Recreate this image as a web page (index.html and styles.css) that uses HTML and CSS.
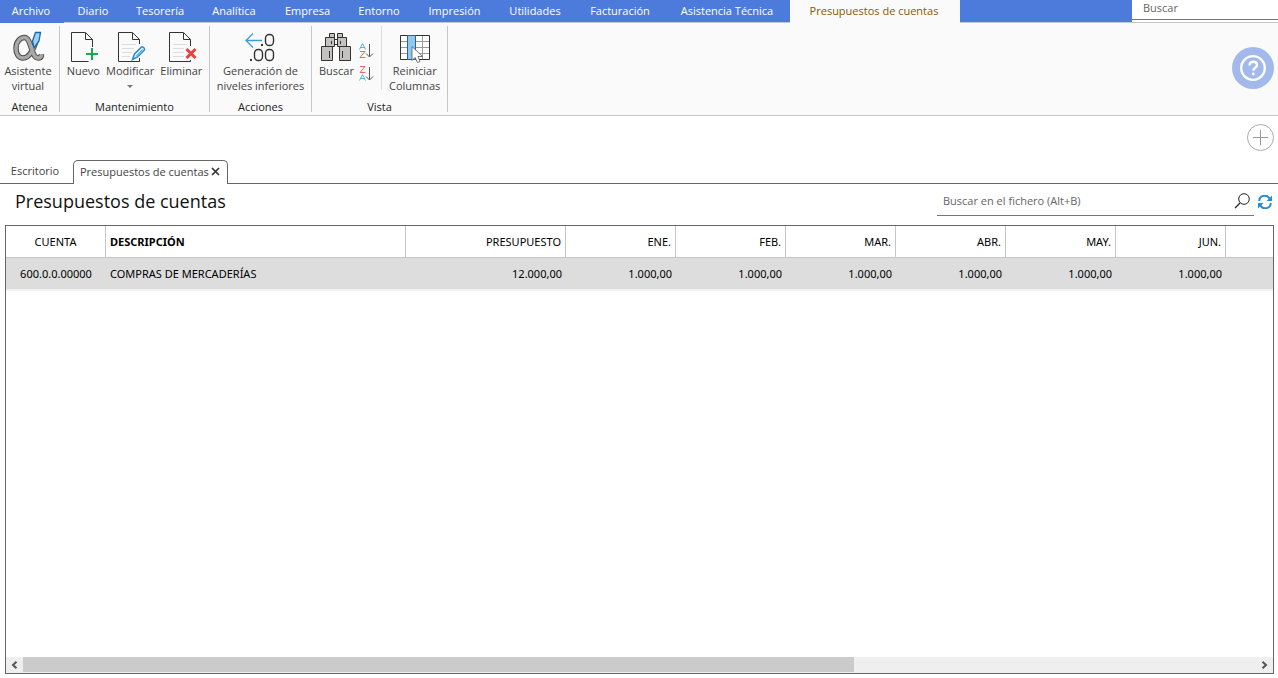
FILE: index.html
```
<!DOCTYPE html>
<html lang="es">
<head>
<meta charset="utf-8">
<meta name="viewport" content="width=device-width, initial-scale=1">
<title>Presupuestos de cuentas</title>
<link rel="stylesheet" href="styles.css">
</head>
<body>
<div class="app">
  <header class="topbar">
    <nav class="menu" aria-label="Menú principal">
      <button class="menu-item" type="button">Archivo</button>
      <button class="menu-item" type="button">Diario</button>
      <button class="menu-item" type="button">Tesorería</button>
      <button class="menu-item" type="button">Analítica</button>
      <button class="menu-item" type="button">Empresa</button>
      <button class="menu-item" type="button">Entorno</button>
      <button class="menu-item" type="button">Impresión</button>
      <button class="menu-item" type="button">Utilidades</button>
      <button class="menu-item" type="button">Facturación</button>
      <button class="menu-item" type="button">Asistencia Técnica</button>
      <button class="menu-item menu-item-active" type="button">Presupuestos de cuentas</button>
    </nav>
    <div class="top-search"><input type="text" placeholder="Buscar" aria-label="Buscar"></div>
  </header>

  <section class="ribbon" aria-label="Herramientas">
    <div class="group group-atenea">
      <div class="tools">
        <button class="tool" type="button">
          <svg class="icon" width="32" height="32" viewBox="0 0 32 32">
            <path d="M24.500 9C21.500 18 18 27 11 27C6 27 4 22 4 17C4 11 8 6.500 12.500 6.500C19.500 6.500 19 27 26 27C28.500 27 29.500 25.500 29.500 23" fill="none" stroke="#4c4c4c" stroke-width="5.500"/>
            <path d="M24.500 9C21.500 18 18 27 11 27C6 27 4 22 4 17C4 11 8 6.500 12.500 6.500C19.500 6.500 19 27 26 27C28.500 27 29.500 25.500 29.500 23" fill="none" stroke="#a8a8a8" stroke-width="3.500"/>
            <path d="M23.500 1.500H28.500L27 10L22 17L20.500 10Z" fill="#9fd0f3" stroke="#1668ae" stroke-width="1.300"/>
          </svg>
          <span>Asistente<br>virtual</span>
        </button>
      </div>
      <div class="group-name">Atenea</div>
    </div>

    <div class="group group-mant">
      <div class="tools">
        <button class="tool" type="button">
          <svg class="icon" width="32" height="32" viewBox="0 0 32 32">
            <path d="M18 1.500H4.500V30.500H21.500M25.500 16V8.500L18.500 1.500V8.500H25.500" fill="none" stroke="#333"/>
            <path d="M25 17V29M19 23H31" stroke="#14ad4e" stroke-width="2"/>
          </svg>
          <span>Nuevo</span>
        </button>
        <button class="tool" type="button">
          <svg class="icon" width="32" height="32" viewBox="0 0 32 32">
            <path d="M18 1.500H4.500V30.500H25.500V27M25.500 13V8.500L18.500 1.500V8.500H25.500" fill="none" stroke="#333"/>
            <path d="M8 13.500H22M8 17.500H20M8 21.500H18M8 25.500H16" stroke="#ddd"/>
            <path d="M18.500 28.500L20.500 23L27.500 16Q30.500 15.500 30.500 19L23.500 26Z" fill="#dff0fb" stroke="#2a8bd0" stroke-width="1.500"/>
            <path d="M22.500 25L28.500 18.500" stroke="#2a8bd0"/>
          </svg>
          <span>Modificar</span>
          <i class="caret"></i>
        </button>
        <button class="tool" type="button">
          <svg class="icon" width="32" height="32" viewBox="0 0 32 32">
            <path d="M18 1.500H4.500V30.500H25.500V29M25.500 15V8.500L18.500 1.500V8.500H25.500" fill="none" stroke="#333"/>
            <path d="M8 13.500H22M8 17.500H19M8 21.500H19M8 25.500H19" stroke="#ddd"/>
            <path d="M21.500 18L30.500 27M30.500 18L21.500 27" stroke="#ef3e3e" stroke-width="3"/>
          </svg>
          <span>Eliminar</span>
        </button>
      </div>
      <div class="group-name">Mantenimiento</div>
    </div>

    <div class="group group-acc">
      <div class="tools">
        <button class="tool" type="button">
          <svg class="icon" width="32" height="32" viewBox="0 0 32 32">
            <path d="M18 9.500H2M9 2.500L2 9.500L9 16.500" fill="none" stroke="#3d9bd8" stroke-width="1.300"/>
            <g fill="none" stroke="#333" stroke-width="1.400">
              <rect x="21.500" y="3.500" width="8" height="11" rx="3.800"/>
              <rect x="10.500" y="18.500" width="8" height="11" rx="3.800"/>
              <rect x="21.500" y="18.500" width="8" height="11" rx="3.800"/>
            </g>
            <path d="M17 13H19V15H17ZM6 28H8V30H6Z" fill="#333"/>
          </svg>
          <span>Generación de<br>niveles inferiores</span>
        </button>
      </div>
      <div class="group-name">Acciones</div>
    </div>

    <div class="group group-vista">
      <div class="tools">
        <button class="tool" type="button">
          <svg class="icon" width="32" height="32" viewBox="0 0 32 32">
            <g fill="#c4c2c1" stroke="#333">
              <path d="M9.500 2.500H14.500V6.500H9.500ZM17.500 2.500H22.500V6.500H17.500Z"/>
              <path d="M5.500 6.500H14.500V15.500H5.500ZM17.500 6.500H26.500V15.500H17.500Z"/>
              <path d="M1.500 15.500H12.500V29.500H1.500ZM19.500 15.500H30.500V29.500H19.500Z"/>
            </g>
            <path d="M14.500 8.500H17.500M14.500 13.500H17.500M11.500 10V13M20.500 10V13M9.500 20V27M22.500 20V27" stroke="#333"/>
          </svg>
          <span>Buscar</span>
        </button>
        <div class="sorts">
          <button class="sort" type="button" aria-label="Orden ascendente">
            <svg class="icon" width="15" height="16" viewBox="0 0 15 16">
              <path d="M.5 6.500L3.500 .5L6.500 6.500M1.500 4.500H5.500" fill="none" stroke="#5fb0e2"/>
              <path d="M1 8.500H6L1 14.500H6.500" fill="none" stroke="#ef6464"/>
              <path d="M10.500 1V13.500M7 10.500L10.500 14L14 10.500" fill="none" stroke="#555"/>
            </svg>
          </button>
          <button class="sort" type="button" aria-label="Orden descendente">
            <svg class="icon" width="15" height="16" viewBox="0 0 15 16">
              <path d="M1 .5H6L1 6.500H6.500" fill="none" stroke="#ef6464"/>
              <path d="M.5 14.500L3.500 8.500L6.500 14.500M1.500 12.500H5.500" fill="none" stroke="#5fb0e2"/>
              <path d="M10.500 1V13.500M7 10.500L10.500 14L14 10.500" fill="none" stroke="#555"/>
            </svg>
          </button>
        </div>
        <button class="tool tool-reset" type="button">
          <svg class="icon" width="32" height="32" viewBox="0 0 32 32">
            <path d="M1.500 4.500H30.500V28.500H1.500Z" fill="#fff"/>
            <path d="M2 10.500H30M2 16.500H30M2 22.500H30M23.500 5V28" stroke="#9a9a9a"/>
            <path d="M1.500 4.500H30.500V28.500H1.500Z" fill="none" stroke="#333"/>
            <path d="M8.500 4.500H16.500V28.500H8.500Z" fill="#8fc8f0" stroke="#1767ad"/>
            <path d="M13 15.500V29.500L16 26.500L18.500 31.500L21 30.500L19 25.500H23.500Z" fill="#fff" stroke="#555" stroke-width=".8"/>
          </svg>
          <span>Reiniciar<br>Columnas</span>
        </button>
      </div>
      <div class="group-name">Vista</div>
    </div>

    <button class="help" type="button" aria-label="Ayuda">
      <svg class="icon" width="42" height="42" viewBox="0 0 42 42">
        <circle cx="21" cy="21" r="21" fill="#a3b9ec"/>
        <circle cx="21" cy="21" r="11.800" fill="none" stroke="#fff" stroke-width="2.300"/>
        <path d="M17.500 18.500C17.500 13.500 25 13.500 25 18C25 21 21.300 20.500 21.300 23.800" fill="none" stroke="#fff" stroke-width="2.400"/>
        <circle cx="21.300" cy="27" r="1.400" fill="#fff"/>
      </svg>
    </button>
  </section>

  <div class="strip">
    <button class="add" type="button" aria-label="Añadir">
      <svg class="icon" width="28" height="28" viewBox="0 0 28 28">
        <circle cx="14.500" cy="14.500" r="13" fill="none" stroke="#aaa"/>
        <path d="M7 14.500H22M14.500 7V22" stroke="#999"/>
      </svg>
    </button>
  </div>

  <div class="tabs">
    <button class="tab" type="button">Escritorio</button>
    <div class="tab tab-active">
      <span>Presupuestos de cuentas</span>
      <button class="close" type="button" aria-label="Cerrar">
        <svg class="icon" width="9" height="9" viewBox="0 0 9 9"><path d="M1 1L8 8M8 1L1 8" stroke="#333" stroke-width="1.700"/></svg>
      </button>
    </div>
    <div class="tabs-fill"></div>
  </div>

  <main class="content">
    <div class="head">
      <h1>Presupuestos de cuentas</h1>
      <div class="file-search">
        <input type="text" placeholder="Buscar en el fichero (Alt+B)" aria-label="Buscar en el fichero">
        <svg class="icon" width="16" height="16" viewBox="0 0 16 16">
          <circle cx="10" cy="6" r="5.300" fill="none" stroke="#222"/>
          <path d="M6 10L1 15" stroke="#222" stroke-width="1.200"/>
        </svg>
      </div>
      <button class="refresh" type="button" aria-label="Actualizar">
        <svg class="icon" width="14" height="14" viewBox="0 0 14 14">
          <path d="M1.200 6A5.500 5.500 0 0 1 11.500 3.500M12.800 8A5.500 5.500 0 0 1 2.500 10.500" fill="none" stroke="#2a8bd0" stroke-width="2"/>
          <path d="M14 .5V6H8.500ZM0 13.500V8H5.500Z" fill="#2a8bd0"/>
        </svg>
      </button>
    </div>

    <div class="grid">
      <div class="grid-body">
        <table>
          <colgroup>
            <col class="c-cuenta"><col class="c-desc"><col class="c-pres">
            <col class="c-mes"><col class="c-mes"><col class="c-mes"><col class="c-mes"><col class="c-mes"><col class="c-mes">
            <col>
          </colgroup>
          <thead>
            <tr><th class="center">CUENTA</th><th class="left sorted">DESCRIPCIÓN</th><th>PRESUPUESTO</th><th>ENE.</th><th>FEB.</th><th>MAR.</th><th>ABR.</th><th>MAY.</th><th>JUN.</th><th></th></tr>
          </thead>
          <tbody>
            <tr><td class="center">600.0.0.00000</td><td class="left">COMPRAS DE MERCADERÍAS</td><td>12.000,00</td><td>1.000,00</td><td>1.000,00</td><td>1.000,00</td><td>1.000,00</td><td>1.000,00</td><td>1.000,00</td><td></td></tr>
          </tbody>
        </table>
      </div>
      <div class="scrollbar">
        <button class="arrow" type="button" aria-label="Desplazar a la izquierda">
          <svg class="icon" width="7" height="8" viewBox="0 0 7 8"><path d="M5.500 .8L2 4L5.500 7.200" fill="none" stroke="#555" stroke-width="2"/></svg>
        </button>
        <div class="track"><div class="thumb"></div></div>
        <button class="arrow" type="button" aria-label="Desplazar a la derecha">
          <svg class="icon" width="7" height="8" viewBox="0 0 7 8"><path d="M1.500 .8L5 4L1.500 7.200" fill="none" stroke="#555" stroke-width="2"/></svg>
        </button>
      </div>
    </div>
  </main>
</div>
</body>
</html>
```
FILE: styles.css
```
* { box-sizing: border-box; }

body {
  margin: 0;
  background: #fff;
  color: #444;
  font: 11px/15px "Open Sans", "Noto Sans", sans-serif;
}

button, input {
  margin: 0;
  padding: 0;
  border: 0;
  background: none;
  color: inherit;
  font: inherit;
}

.icon { display: block; flex: none; }

.app {
  display: flex;
  flex-direction: column;
  height: 100vh;
}

/* Menu bar */
.topbar {
  display: flex;
  height: 23px;
  background: #4d7bdc;
}

.menu {
  display: grid;
  flex: 1;
  grid-template-columns: 64px 60px 74px 74px 73px 70px 81px 80px 90px 124px 170px;
  border-bottom: 1px solid #c4c8d0;
}

.menu-item {
  padding-right: 2px;
  padding-bottom: 2px;
  color: #fff;
  text-align: center;
  white-space: nowrap;
}

.menu-item:first-child {
  margin-bottom: -1px;
  padding-bottom: 3px;
  background: #4d7bdc;
}

.menu-item-active {
  margin-bottom: -1px;
  padding-bottom: 3px;
  background: #fafafa;
  color: #8a5a00;
}

.top-search {
  width: 146px;
  height: 23px;
  border-bottom: 1px solid #c6c6c6;
  background: #fff;
}

.top-search input {
  display: block;
  width: 100%;
  height: 20px;
  padding: 0 11px 4px;
  border-bottom: 1px solid #777;
}

input::placeholder { color: #666; opacity: 1; }

/* Ribbon */
.ribbon {
  display: flex;
  height: 93px;
  padding-top: 3px;
  border-bottom: 1px solid #c6c6c6;
  background: #fafafa;
}

.group {
  display: flex;
  flex-direction: column;
  height: 86px;
  border-right: 1px solid #c6c6c6;
}

.group-atenea { width: 60px; }
.group-mant { width: 150px; }
.group-acc { width: 102px; }
.group-vista { width: 136px; }

.tools {
  display: flex;
  flex: 1;
  justify-content: center;
}

.tool {
  display: flex;
  flex-direction: column;
  align-items: center;
  padding-top: 5px;
  white-space: nowrap;
}

.group-atenea .tool { padding-right: 3px; }
.group-mant .tools { gap: 6px; }

.caret {
  margin-top: 7px;
  border: 3px solid transparent;
  border-top-color: #777;
  border-bottom: 0;
}

.group-name {
  height: 12px;
  color: #222;
  line-height: 14px;
  text-align: center;
}

.sorts {
  display: flex;
  flex-direction: column;
  gap: 7px;
  margin-left: 5px;
  padding: 17px 7px 0 0;
}

.tool-reset {
  height: 64px;
  padding-left: 7px;
  border-left: 1px solid #ddd;
}

.group-vista .tools { justify-content: flex-start; padding-left: 7px; }

.help { align-self: flex-start; margin: 21px 4px 0 auto; border-radius: 50%; }

/* Document tabs */
.strip {
  display: flex;
  justify-content: flex-end;
  height: 44px;
  padding: 7px 4px 0 0;
}

.add { align-self: flex-start; }

.tabs { display: flex; height: 24px; }

.tab {
  width: 73px;
  padding: 0 3px 2px 0;
  border-bottom: 1px solid #666;
}

.tab-active {
  display: flex;
  align-items: center;
  justify-content: space-between;
  width: 155px;
  padding: 0 7px 3px 6px;
  border: 1px solid #666;
  border-bottom: 0;
  border-radius: 5px 5px 0 0;
  white-space: nowrap;
}

.tabs-fill { flex: 1; border-bottom: 1px solid #666; }

/* File view */
.content {
  display: flex;
  flex: 1;
  flex-direction: column;
  min-height: 0;
  padding: 0 4px 4px 5px;
}

.head {
  display: flex;
  height: 41px;
}

h1 {
  flex: 1;
  margin: 0;
  padding-left: 10px;
  color: #111;
  font-size: 18px;
  font-weight: 400;
  line-height: 35px;
}

.file-search {
  display: flex;
  align-items: center;
  width: 317px;
  height: 32px;
  padding: 3px 4px 0 6px;
  border-bottom: 1px solid #777;
}

.file-search input { flex: 1; padding-bottom: 2px; }

.refresh { align-self: flex-start; padding: 11px 2px 0 4px; }

.grid {
  display: flex;
  flex: 1;
  flex-direction: column;
  min-height: 0;
  border: 1px solid #666;
}

.grid-body { flex: 1; overflow: hidden; }

table {
  width: 100%;
  border-collapse: separate;
  border-spacing: 0;
  table-layout: fixed;
  color: #000;
  font-family: "Noto Sans", "Open Sans", sans-serif;
}

.c-cuenta { width: 100px; }
.c-desc { width: 300px; }
.c-pres { width: 160px; }
.c-mes { width: 110px; }

th, td {
  height: 32px;
  padding: 0 4px;
  text-align: right;
  white-space: nowrap;
}

th {
  border-right: 1px solid #c6c6c6;
  border-bottom: 1px solid #c6c6c6;
  font-weight: 400;
}

th:last-child { border-right: 0; }

td {
  height: 33px;
  border-bottom: 2px solid #f0f0f0;
  background: #ddd;
}

.center { text-align: center; }
.left { text-align: left; }
.sorted { font-weight: 700; }

.scrollbar {
  display: flex;
  height: 16px;
  background: #efefef;
}

.arrow {
  display: flex;
  align-items: center;
  justify-content: center;
  width: 17px;
}

.track { flex: 1; }

.thumb {
  width: 67.4%;
  height: 15px;
  background: #cbcbcb;
}
```
